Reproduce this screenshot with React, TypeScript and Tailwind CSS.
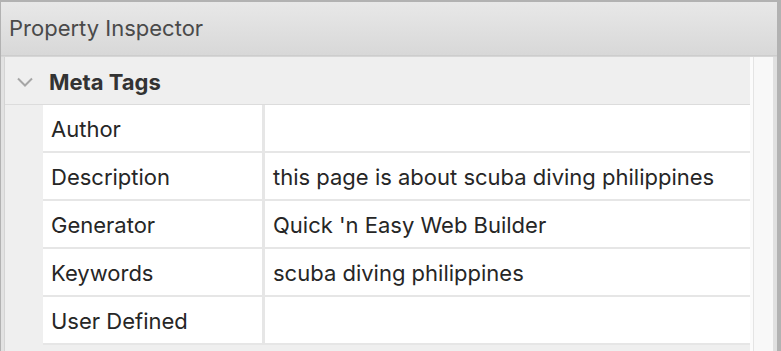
import React from "react";

const rows: [string, string][] = [
  ["Author", ""],
  ["Description", "this page is about scuba diving philippines"],
  ["Generator", "Quick 'n Easy Web Builder"],
  ["Keywords", "scuba diving philippines"],
  ["User Defined", ""],
];

export default function App() {
  return (
    <div
      className="w-[781px] h-[351px] overflow-hidden bg-[#b2b2b2] pt-[2px] pl-[1px] pr-[4px] flex flex-col"
      style={{ fontFamily: "Inter, 'Noto Sans', sans-serif" }}
    >
      <div className="h-[54px] shrink-0 bg-gradient-to-b from-[#e8e8e8] to-[#d8d8d8] border-b border-[#cdcdcd] flex items-center pl-[8px]">
        <span className="text-[22px] text-[#4a4a4a]">Property Inspector</span>
      </div>
      <div className="flex-1 flex bg-[#e6e6e6] border-t border-[#d6d6d6]">
        <div className="w-[3px] shrink-0 bg-[#e2e2e2]" />
        <div className="w-[1px] shrink-0 bg-[#d4d4d4]" />
        <div className="w-[745px] shrink-0 bg-[#efefef] flex flex-col">
          <div className="h-[48px] shrink-0 flex items-center border-b border-[#dcdcdc]">
            <svg width="16" height="10" viewBox="0 0 16 10" className="ml-[12px] mr-[16px] mt-[2px]">
              <path d="M1 1.5 L8 8.5 L15 1.5" fill="none" stroke="#a6a6a6" strokeWidth="2" />
            </svg>
            <span className="text-[22px] font-bold text-[#333333] mt-[3px]">Meta Tags</span>
          </div>
          {rows.map(([k, v]) => (
            <div key={k} className="h-[48px] shrink-0 flex ml-[38px] border-b-2 border-[#e6e6e6]">
              <div className="w-[219px] bg-white flex items-center pl-[8px] pt-[3px] text-[22px] text-[#262626]">{k}</div>
              <div className="w-[3px] bg-[#e6e6e6]" />
              <div className="flex-1 bg-white flex items-center pl-[8px] pt-[3px] text-[22px] text-[#262626]">{v}</div>
            </div>
          ))}
        </div>
        <div className="w-[3px] shrink-0 bg-[#fbfbfb]" />
        <div className="w-[1px] shrink-0 bg-[#e4e4e4]" />
        <div className="w-[19px] shrink-0 bg-[#f8f8f8]" />
        <div className="w-[4px] shrink-0 bg-[#e0e0e0]" />
      </div>
    </div>
  );
}
